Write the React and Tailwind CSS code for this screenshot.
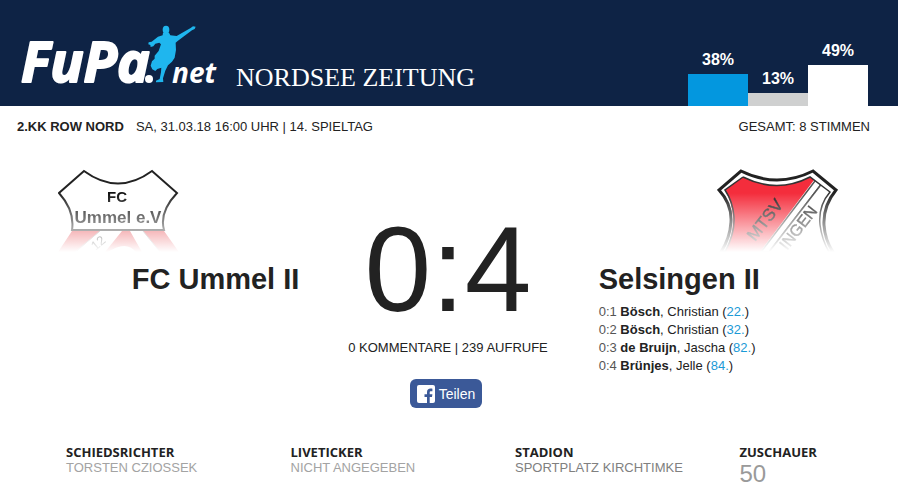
const VOTES = [
  { label: "38%", height: 32, color: "bg-[#0397df]" },
  { label: "13%", height: 13, color: "bg-[#cfd0d0]" },
  { label: "49%", height: 41, color: "bg-white" },
];

const GOALS = [
  { score: "0:1", last: "Bösch", first: "Christian", minute: "22." },
  { score: "0:2", last: "Bösch", first: "Christian", minute: "32." },
  { score: "0:3", last: "de Bruijn", first: "Jascha", minute: "82." },
  { score: "0:4", last: "Brünjes", first: "Jelle", minute: "84." },
];

const DETAILS = [
  { label: "SCHIEDSRICHTER", value: "TORSTEN CZIOSSEK", style: "text-[13px] leading-4 text-[#a3a3a3]" },
  { label: "LIVETICKER", value: "NICHT ANGEGEBEN", style: "text-[13px] leading-4 text-[#a3a3a3]" },
  { label: "STADION", value: "SPORTPLATZ KIRCHTIMKE", style: "text-[13px] leading-4 text-[#808080]" },
  { label: "ZUSCHAUER", value: "50", style: "text-2xl leading-7 text-[#9a9a9a]" },
];

function FupaLogo() {
  return (
    <svg viewBox="0 0 204 68" className="h-17 w-51 overflow-visible" role="img" aria-label="FuPa.net">
      <g fill="#fff" fontWeight="700" fontStyle="italic" fontFamily="'Open Sans', sans-serif">
        <text x="1" y="58" fontSize="55" stroke="#fff" strokeWidth="2" strokeLinejoin="round">
          FuPa
        </text>
        <text x="152" y="59" fontSize="28">net</text>
      </g>
      <circle cx="129" cy="55" r="4" fill="#fff" />
      <g fill="#1fb6ee" transform="translate(-20 -14) scale(.3333)">
        <ellipse cx="498" cy="59" rx="10" ry="12" />
        <path d="M489 68 L507 68 L511 76 L530 78 L572 54 L579 49 L587 50 L584 57 L576 61 L533 93 L527 98 L528 120 L524 143 L516 155 L504 166 L496 182 L489 205 L490 216 L468 217 L468 212 L479 207 L483 187 L484 173 L472 177 L466 183 L457 178 L452 167 L456 154 L464 146 L464 137 L476 123 L483 103 L478 98 L466 101 L460 109 L452 111 L451 105 L445 103 L446 97 L455 95 L474 80 L488 76 Z" />
      </g>
    </svg>
  );
}

function UmmelCrest() {
  return (
    <svg viewBox="0 0 122 84" className="h-21 w-[122px]" role="img" aria-label="FC Ummel e.V">
      <defs>
        <linearGradient id="ummelFade" x1="0" y1="0" x2="0" y2="1">
          <stop offset="0" stopColor="#fff" />
          <stop offset=".3" stopColor="#fff" />
          <stop offset="1" stopColor="#000" />
        </linearGradient>
        <mask id="ummelMask">
          <rect width="122" height="84" fill="url(#ummelFade)" />
        </mask>
      </defs>
      <g mask="url(#ummelMask)">
        <path d="M14 63 L42 63 L18 84 L0 84Z M72 63 L84 84 L78 84 Q68 72 50 84 L47 84 L64 63Z M85 63 H106 L121 84 H102Z" fill="#e5383f" />
        <path d="M42 63 L17 84 M85 63 L102 84" stroke="#999" fill="none" />
        <path
          d="M26 3 Q60 28 94 3 L119 25 Q101 44 106 62 H14 Q17 43 1 25 Z"
          fill="#fff"
          stroke="#222"
          strokeWidth="2"
        />
        <g fill="#111" fontFamily="'Liberation Sans', sans-serif" fontWeight="700" textAnchor="middle">
          <text x="59" y="34" fontSize="15">FC</text>
          <text x="60" y="55" fontSize="17">Ummel e.V</text>
          <text x="41" y="79" fontSize="13" fontWeight="400" transform="rotate(-40 41 76)">12</text>
        </g>
      </g>
    </svg>
  );
}

function SelsingenCrest() {
  return (
    <svg viewBox="0 0 122 84" className="h-21 w-[122px]" role="img" aria-label="MTSV Selsingen">
      <defs>
        <linearGradient id="selsingenFade" x1="0" y1="0" x2="0" y2="1">
          <stop offset="0" stopColor="#fff" />
          <stop offset=".3" stopColor="#fff" />
          <stop offset="1" stopColor="#000" />
        </linearGradient>
        <mask id="selsingenMask">
          <rect width="122" height="84" fill="url(#selsingenFade)" />
        </mask>
        <clipPath id="selsingenShield">
          <path d="M26 9 Q60 26 93 9 L113 24 Q101 38 103 57 Q105 72 113 84 H8 Q17 65 16 49 Q15 34 8 22 Z" />
        </clipPath>
      </defs>
      <g mask="url(#selsingenMask)">
        <path
          d="M24 3 Q60 21 96 3 L119 22 Q106 38 107 57 Q108 72 116 84 H4 Q13 70 14 54 Q15 36 2 22 Z"
          fill="#fff"
          stroke="#222"
          strokeWidth="3"
        />
        <g clipPath="url(#selsingenShield)">
          <path d="M0 0 H106 L43 84 H0 Z" fill="#f42d3c" />
          <path d="M101 9 L44 84 H52 L106 14 Z" fill="#fff" stroke="#555" strokeWidth="1.500" />
          <path d="M106 14 L52 84 H122 V10 Z" fill="#fff" />
          <path d="M106 14 L52 84" stroke="#555" strokeWidth="1.500" />
        </g>
        <path
          d="M26 9 Q60 26 93 9 L113 24 Q101 38 103 57 Q105 72 112 84 M8 84 Q18 65 17 49 Q16 34 8 22 L26 9"
          fill="none"
          stroke="#333"
          strokeWidth="1.500"
        />
        <g fill="#222" stroke="#222" strokeWidth=".4" fontFamily="'Liberation Sans', sans-serif">
          <text x="38" y="74" fontSize="17" transform="rotate(-52 38 74)">MTSV</text>
          <text x="70" y="83" fontSize="16" transform="rotate(-52 70 83)">INGEN</text>
        </g>
      </g>
    </svg>
  );
}

function VoteChart() {
  return (
    <div className="mr-[30px] flex items-end">
      {VOTES.map((vote) => (
        <div key={vote.label} className="w-15 text-center">
          <div className="mb-1 text-base leading-5 font-bold text-white">{vote.label}</div>
          <div className={vote.color} style={{ height: vote.height }} />
        </div>
      ))}
    </div>
  );
}

export default function App() {
  return (
    <div className="bg-white font-['Liberation_Sans',Arial,sans-serif] text-[#222]">
      <header className="flex h-[106px] items-end justify-between bg-[#0e2345]">
        <div className="flex items-end gap-3 pb-3.5 pl-5">
          <FupaLogo />
          <span className="font-['Liberation_Serif',serif] text-[26px] leading-7 whitespace-nowrap text-white">
            NORDSEE ZEITUNG
          </span>
        </div>
        <VoteChart />
      </header>

      <div className="flex justify-between pt-[13px] pr-7 pl-[17px] text-[13px] leading-4">
        <div className="flex gap-3">
          <strong>2.KK ROW NORD</strong>
          <span>SA, 31.03.18 16:00 UHR | 14. SPIELTAG</span>
        </div>
        <span>GESAMT: 8 STIMMEN</span>
      </div>

      <main className="grid grid-cols-3 pt-[33px]">
        <section>
          <div className="pl-[58px]">
            <UmmelCrest />
          </div>
          <h2 className="pt-[9px] text-right text-[29px] leading-9 font-bold">FC Ummel II</h2>
        </section>

        <section className="flex flex-col items-center pt-[41px] pr-0.5">
          <div className="text-[120px] leading-[120px]">0:4</div>
          <p className="pt-[11px] text-[13px] leading-4">0 KOMMENTARE | 239 AUFRUFE</p>
          <button
            type="button"
            className="mt-[23px] mr-1 flex h-[29px] items-center gap-1 rounded-md bg-[#3b5998] px-[7px] text-sm text-white"
          >
            <svg viewBox="0 0 18 18" className="size-[18px]" aria-hidden="true">
              <rect width="18" height="18" rx="2" fill="#fff" />
              <path
                d="M10 18v-6H7.500V9.200H10V7.300C10 4.900 11.400 3.600 13.600 3.600c1 0 1.500.1 1.800.1v2.500h-1.300c-1.100 0-1.400.5-1.400 1.300v1.700h2.700L15 12h-2.300v6Z"
                fill="#3b5998"
              />
            </svg>
            Teilen
          </button>
        </section>

        <section>
          <div className="flex justify-end pr-[59px]">
            <SelsingenCrest />
          </div>
          <h2 className="pt-[9px] text-[29px] leading-9 font-bold">Selsingen II</h2>
          <ul className="pt-1.5 text-[13px] leading-[18px]">
            {GOALS.map((goal) => (
              <li key={goal.score}>
                <span className="text-[#555]">{goal.score}</span> <strong>{goal.last}</strong>, {goal.first} (
                <span className="text-[#1b9ad6]">{goal.minute}</span>)
              </li>
            ))}
          </ul>
        </section>
      </main>

      <dl className="grid grid-cols-4 pt-9">
        {DETAILS.map((item) => (
          <div key={item.label} className="pl-[66px]">
            <dt className="font-['Open_Sans',sans-serif] text-[13px] leading-4 font-bold">{item.label}</dt>
            <dd className={`whitespace-nowrap ${item.style}`}>{item.value}</dd>
          </div>
        ))}
      </dl>
    </div>
  );
}
